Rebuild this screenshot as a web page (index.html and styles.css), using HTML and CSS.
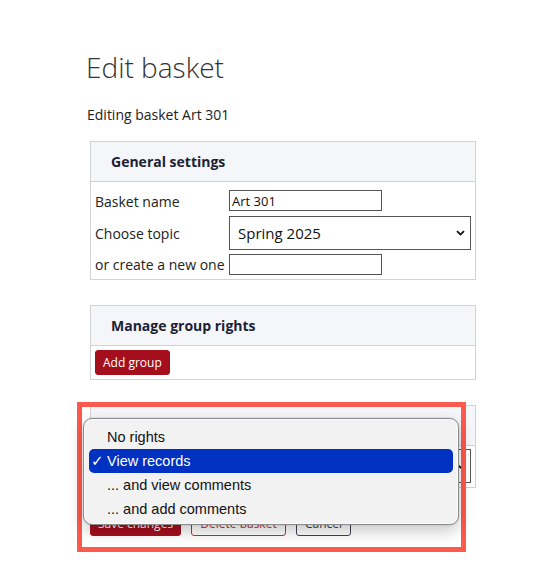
FILE: index.html
```html
<!DOCTYPE html>
<html lang="en">
<head>
<meta charset="utf-8">
<title>Edit basket</title>
<link rel="stylesheet" href="styles.css">
</head>
<body>
<main class="page">
  <h1 class="title">Edit basket</h1>
  <p class="intro">Editing basket Art 301</p>

  <section class="panel">
    <div class="panel-head">General settings</div>
    <div class="panel-body form-grid">
      <label class="lbl" for="name">Basket name</label>
      <input class="txt first" id="name" type="text" value="Art 301">
      <label class="lbl" for="topic">Choose topic</label>
      <select class="sel" id="topic"><option>Spring 2025</option></select>
      <label class="lbl" for="newtopic">or create a new one</label>
      <input class="txt" id="newtopic" type="text">
    </div>
  </section>

  <section class="panel">
    <div class="panel-head">Manage group rights</div>
    <div class="panel-body">
      <button class="btn btn-primary" type="button">Add group</button>
    </div>
  </section>

  <section class="panel panel-last">
    <div class="panel-head"></div>
    <div class="panel-body form-grid tight">
      <span class="lbl"></span>
      <select class="sel" aria-label="Rights"><option></option></select>
    </div>
  </section>

  <div class="actions">
    <button class="btn btn-primary" type="button">Save changes</button>
    <button class="btn btn-danger" type="button">Delete basket</button>
    <button class="btn btn-plain" type="button">Cancel</button>
  </div>
</main>

<div class="highlight-frame"></div>
<ul class="menu">
  <li class="menu-item">No rights</li>
  <li class="menu-item active"><span class="check">✓</span>View records</li>
  <li class="menu-item">... and view comments</li>
  <li class="menu-item">... and add comments</li>
</ul>
</body>
</html>
```

FILE: styles.css
```css
* { box-sizing: border-box; }

html, body {
  margin: 0;
  padding: 0;
  background: #ffffff;
}

body {
  font-family: "Open Sans", "Liberation Sans", sans-serif;
  color: #222222;
  width: 540px;
  height: 583px;
  overflow: hidden;
  position: relative;
}

.page {
  padding: 50px 0 0 90px;
  width: 476px;
  box-sizing: content-box;
}

.title {
  margin: 0 0 0 -4px;
  font-size: 28px;
  font-weight: 300;
  line-height: 35px;
  color: #333333;
}

.intro {
  margin: 20px 0 17px -3px;
  font-size: 14px;
  line-height: 19px;
  color: #222222;
}

.panel {
  width: 386px;
  border: 1px solid #d2d2d6;
  margin-bottom: 25px;
}

.panel-last { margin-bottom: 23px; }

.panel-head {
  height: 40px;
  background: #f5f6fa;
  border-bottom: 1px solid #d2d2d6;
  padding-left: 20px;
  display: flex;
  align-items: center;
  font-size: 14px;
  font-weight: 700;
  color: #1c2234;
}

.panel-body {
  padding: 4px;
}

.form-grid {
  display: grid;
  grid-template-columns: 134px 1fr;
  row-gap: 4px;
  align-items: center;
  padding-top: 8px;
}

.form-grid.tight { padding-top: 3px; }

.lbl {
  font-size: 14px;
  color: #222222;
  line-height: 19px;
  white-space: nowrap;
}

.txt {
  width: 153px;
  height: 21px;
  border: 1px solid #555555;
  border-radius: 0;
  padding: 0 2px;
  font-family: "Open Sans", "Liberation Sans", sans-serif;
  font-size: 13px;
  color: #111111;
  background: #ffffff;
  outline: none;
}

.txt.first { margin-bottom: 1px; }

.sel {
  appearance: none;
  -webkit-appearance: none;
  width: 242px;
  height: 34px;
  border: 1px solid #555555;
  border-radius: 0;
  padding: 0 24px 0 8px;
  font-family: "Open Sans", "Liberation Sans", sans-serif;
  font-size: 15px;
  color: #111111;
  background-color: #ffffff;
  background-image: url("data:image/svg+xml,%3Csvg xmlns='http://www.w3.org/2000/svg' width='9' height='6' viewBox='0 0 9 6'%3E%3Cpath d='M1 1.2 L4.5 4.6 L8 1.2' fill='none' stroke='%23111' stroke-width='1.8'/%3E%3C/svg%3E");
  background-repeat: no-repeat;
  background-position: right 5px center;
  background-size: 9px 6px;
}

.btn {
  height: 25px;
  border-radius: 3px;
  padding: 0 7px;
  font-family: "Open Sans", "Liberation Sans", sans-serif;
  font-size: 12px;
  line-height: 23px;
  white-space: nowrap;
  cursor: pointer;
  border: 1px solid transparent;
}

.btn-primary {
  background: #a50f1d;
  border-color: #a50f1d;
  color: #ffffff;
}

.btn-danger {
  background: #ffffff;
  border-color: #d3262c;
  color: #d3262c;
}

.btn-plain {
  background: #ffffff;
  border-color: #3b4152;
  color: #3b4152;
}

.actions {
  display: flex;
  gap: 10px;
}

.actions .btn-primary { width: 91px; padding: 0; }
.actions .btn-danger { width: 95px; padding: 0; }
.actions .btn-plain { width: 55px; padding: 0; }

/* annotation frame drawn over the page */
.highlight-frame {
  position: absolute;
  left: 77px;
  top: 402px;
  width: 389px;
  height: 150px;
  border: 5px solid #fd5a4f;
  pointer-events: none;
}

/* open native-style dropdown menu */
.menu {
  position: absolute;
  left: 83px;
  top: 418px;
  width: 376px;
  height: 107px;
  margin: 0;
  padding: 6px 5px 5px 5px;
  list-style: none;
  background: #f2f2f2;
  border: 1px solid #8a8a8a;
  border-radius: 9px;
  box-shadow: inset 0 0 0 1px rgba(255, 255, 255, 0.7), 0 6px 16px rgba(0, 0, 0, 0.22), 0 0 2px rgba(0, 0, 0, 0.15);
  font-family: "Liberation Sans", Arial, sans-serif;
  font-size: 14.5px;
  color: #111111;
}

.menu-item {
  height: 24px;
  line-height: 24px;
  padding-left: 18px;
  border-radius: 5px;
  position: relative;
  white-space: nowrap;
}

.menu-item.active {
  background: #0031c1;
  color: #ffffff;
}

.check {
  position: absolute;
  left: 2px;
  top: 0;
  font-family: "DejaVu Sans", sans-serif;
  font-size: 15px;
  font-weight: 700;
}
```
